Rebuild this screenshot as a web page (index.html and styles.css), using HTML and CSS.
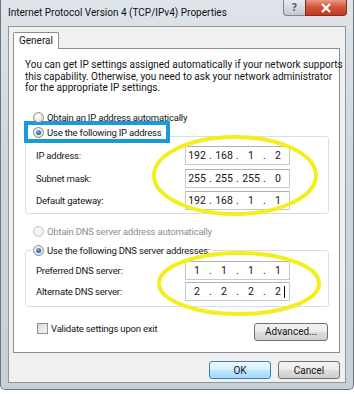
FILE: index.html
```html
<!DOCTYPE html>
<html lang="en">
<head>
    <meta charset="UTF-8">
    <title>Internet Protocol Version 4 (TCP/IPv4) Properties</title>
    <link rel="stylesheet" href="styles.css">
</head>
<body>

    <div class="window">
        <div class="titlebar">
            <span class="title">Internet Protocol Version 4 (TCP/IPv4) Properties</span>
            <div class="caption-buttons">
                <span class="cap-btn help">?</span>
                <span class="cap-btn close">
                    <svg viewBox="0 0 12 10"><path d="M2 1 L10 9 M10 1 L2 9"></path></svg>
                </span>
            </div>
        </div>

        <div class="client">
            <div class="tabs">
                <span class="tab">General</span>
            </div>

            <div class="panel">
                <p class="intro">You can get IP settings assigned automatically if your network supports<br>this capability. Otherwise, you need to ask your network administrator<br>for the appropriate IP settings.</p>

                <div class="option first"><span class="radio"></span>Obtain an IP address automatically</div>

                <div class="group ip-group">
                    <div class="option legend highlight"><span class="radio checked"></span>Use the following IP address</div>
                    <div class="rows">
                        <div class="row">
                            <span class="label">IP address:</span>
                            <span class="ipbox"><span>192</span><i>.</i><span>168</span><i>.</i><span>1</span><i>.</i><span>2</span></span>
                        </div>
                        <div class="row">
                            <span class="label">Subnet mask:</span>
                            <span class="ipbox"><span>255</span><i>.</i><span>255</span><i>.</i><span>255</span><i>.</i><span>0</span></span>
                        </div>
                        <div class="row">
                            <span class="label">Default gateway:</span>
                            <span class="ipbox"><span>192</span><i>.</i><span>168</span><i>.</i><span>1</span><i>.</i><span>1</span></span>
                        </div>
                    </div>
                </div>

                <div class="option disabled dns-auto"><span class="radio"></span>Obtain DNS server address automatically</div>

                <div class="group dns-group">
                    <div class="option legend"><span class="radio checked"></span>Use the following DNS server addresses:</div>
                    <div class="rows">
                        <div class="row">
                            <span class="label">Preferred DNS server:</span>
                            <span class="ipbox"><span>1</span><i>.</i><span>1</span><i>.</i><span>1</span><i>.</i><span>1</span></span>
                        </div>
                        <div class="row">
                            <span class="label">Alternate DNS server:</span>
                            <span class="ipbox"><span>2</span><i>.</i><span>2</span><i>.</i><span>2</span><i>.</i><span>2<b class="caret"></b></span></span>
                        </div>
                    </div>
                </div>

                <div class="panel-footer">
                    <div class="check-option"><span class="checkbox"></span>Validate settings upon exit</div>
                    <button class="btn advanced">Advanced...</button>
                </div>

                <!-- hand-drawn marks over the screenshot -->
                <svg class="marks" viewBox="0 0 327 305">
                    <ellipse cx="222" cy="127.5" rx="81" ry="38.5"></ellipse>
                    <ellipse cx="226" cy="235.5" rx="80" ry="30.5"></ellipse>
                </svg>
            </div>

            <div class="dialog-buttons">
                <button class="btn default">OK</button>
                <button class="btn">Cancel</button>
            </div>
        </div>
    </div>

</body>
</html>
```

FILE: styles.css
```css
/* Base */
body {
    margin: 0;
    background-color: #ffffff;
    font-family: Roboto, 'Open Sans', sans-serif;
    font-size: 10px;
    color: #141414;
}

/* Window frame */
.window {
    width: 354px;
    height: 390px;
    box-sizing: border-box;
    padding: 0 7px 6px 7px;
    background: linear-gradient(to bottom, #dfe4ea 0%, #cfd6de 40%, #c8cfd7 100%);
    border: 1px solid #6f767e;
    border-top: none;
    border-radius: 0 0 5px 5px;
    display: flex;
    flex-direction: column;
}

.titlebar {
    height: 26px;
    display: flex;
    justify-content: space-between;
    align-items: flex-start;
}

.title {
    padding-top: 7px;
    font-size: 10px;
    color: #0c1014;
}

.caption-buttons {
    display: flex;
    margin-right: -1px;
}

.cap-btn {
    height: 16px;
    box-sizing: border-box;
    border: 1px solid #7d8690;
    border-top: none;
    display: flex;
    align-items: center;
    justify-content: center;
}

.cap-btn.help {
    width: 22px;
    border-radius: 0 0 0 4px;
    border-right: none;
    background: linear-gradient(to bottom, #e9ecef, #c2c9d0);
    color: #5d6670;
    font-family: 'DejaVu Sans', sans-serif;
    font-size: 10px;
    font-weight: 700;
}

.cap-btn.close {
    width: 42px;
    border-radius: 0 0 4px 0;
    border-color: #7e2f22;
    background: linear-gradient(to bottom, #e79a86 0%, #d2553b 45%, #c13b23 100%);
}

.cap-btn.close svg {
    width: 12px;
    height: 10px;
    stroke: #ffffff;
    stroke-width: 2.4;
    fill: none;
}

/* Client area */
.client {
    flex: 1;
    background-color: #f0f0f0;
    border: 1px solid #8e969f;
    padding: 5px 5px 0 4px;
    display: flex;
    flex-direction: column;
}

.tabs {
    display: flex;
    height: 16px;
}

.tab {
    width: 44px;
    background-color: #ffffff;
    border: 1px solid #898c95;
    border-bottom: none;
    text-align: center;
    line-height: 16px;
    margin-bottom: -1px;
    position: relative;
    z-index: 1;
    border-radius: 2px 2px 0 0;
}

.panel {
    position: relative;
    height: 305px;
    box-sizing: border-box;
    background-color: #ffffff;
    border: 1px solid #898c95;
    padding: 0 10px 0 11px;
}

.intro {
    margin: 10px 0 0 0;
    line-height: 11.7px;
    white-space: nowrap;
}

/* Radio options */
.option,
.label,
.check-option {
    font-size: 9.5px;
    letter-spacing: -0.2px;
}

.option {
    display: flex;
    align-items: center;
    height: 14px;
    white-space: nowrap;
}

.option.first {
    margin-top: 16px;
    padding-left: 8px;
}

.option.disabled {
    color: #8d8d8d;
}

.radio {
    width: 11px;
    height: 11px;
    box-sizing: border-box;
    border: 1px solid #8b8b8b;
    border-radius: 50%;
    background: radial-gradient(circle at 40% 35%, #ffffff 0%, #e6e6e6 55%, #cfcfcf 100%);
    margin-right: 3px;
    display: flex;
    align-items: center;
    justify-content: center;
}

.radio.checked::after {
    content: "";
    width: 5px;
    height: 5px;
    border-radius: 50%;
    background: radial-gradient(circle at 40% 35%, #7fb7e2 0%, #1f5f9a 70%);
}

.option.disabled .radio {
    border-color: #c2c2c2;
    background: #f3f3f3;
}

/* Group boxes */
.group {
    border: 1px solid #d5dfe5;
    border-radius: 3px;
}

.legend {
    background-color: #ffffff;
    width: fit-content;
}

.ip-group {
    margin-top: 12px;
    padding-bottom: 3px;
}

.legend.highlight {
    height: 22px;
    box-sizing: border-box;
    border: 4px solid #1a9bd7;
    padding: 0 4px 0 5px;
    margin: -16px 0 0 -2px;
}

.dns-group {
    margin-top: 12px;
    padding-bottom: 5px;
}

.dns-group .legend {
    margin: -8px 0 0 5px;
    padding: 0 2px;
}

.dns-auto {
    margin-top: 10px;
    padding-left: 8px;
}

.rows {
    display: flex;
    flex-direction: column;
    padding: 0 38px 0 10px;
}

.ip-group .rows {
    margin-top: 3px;
    gap: 3.5px;
}

.dns-group .rows {
    margin-top: 3.5px;
    gap: 2px;
}

.row {
    display: flex;
    justify-content: space-between;
    align-items: center;
    height: 19px;
}

.ipbox {
    width: 105px;
    height: 19px;
    box-sizing: border-box;
    border: 1px solid #c4c9ce;
    border-top-color: #aeb3b9;
    background-color: #ffffff;
    display: flex;
    align-items: center;
    font-size: 10.5px;
}

.ipbox span {
    width: 22px;
    text-align: center;
    position: relative;
}

.ipbox i {
    font-style: normal;
    width: 5px;
    text-align: center;
}

.caret {
    position: absolute;
    top: 1px;
    right: 4px;
    width: 1px;
    height: 12px;
    background-color: #000000;
}

/* Footer inside the panel */
.panel-footer {
    margin-top: 16px;
    display: flex;
    justify-content: space-between;
    align-items: center;
}

.check-option {
    display: flex;
    align-items: center;
    padding-left: 12px;
    margin-top: -6px;
}

.checkbox {
    width: 11px;
    height: 11px;
    box-sizing: border-box;
    border: 1px solid #8e8f8f;
    background: linear-gradient(135deg, #d9d9d9, #f6f6f6);
    margin-right: 3px;
}

/* Buttons */
.btn {
    font-family: Roboto, 'Open Sans', sans-serif;
    font-size: 10px;
    color: #141414;
    height: 18px;
    padding: 0;
    border: 1px solid #707070;
    border-radius: 3px;
    background: linear-gradient(to bottom, #f2f2f2 0%, #ebebeb 50%, #dddddd 51%, #cfcfcf 100%);
}

.btn.advanced {
    width: 74px;
    margin-right: 1px;
}

.btn.default {
    border-color: #3c7fb1;
    background: linear-gradient(to bottom, #eaf6fd 0%, #d9f0fc 50%, #bee6fd 51%, #a7d9f5 100%);
}

.dialog-buttons {
    display: flex;
    justify-content: flex-end;
    gap: 7px;
    margin-top: 8px;
}

.dialog-buttons .btn {
    width: 62px;
}

/* Yellow marks */
.marks {
    position: absolute;
    left: -1px;
    top: -1px;
    width: 327px;
    height: 305px;
    pointer-events: none;
}

.marks ellipse {
    fill: none;
    stroke: #f3ee1c;
    stroke-width: 4;
}
```
